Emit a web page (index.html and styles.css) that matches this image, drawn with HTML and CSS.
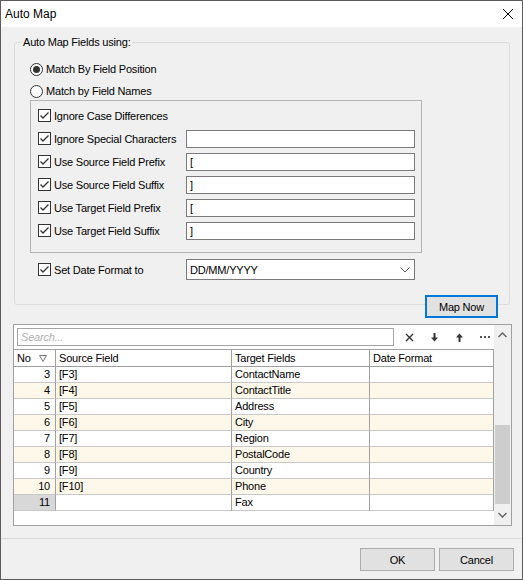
FILE: index.html
```html
<!DOCTYPE html>
<html lang="en">
<head>
    <meta charset="UTF-8">
    <title>Auto Map</title>
    <link rel="stylesheet" href="styles.css">
</head>
<body>
    <div class="window">
        <div class="titlebar">
            <span class="title">Auto Map</span>
            <svg class="close" width="12" height="12" viewBox="0 0 12 12"><path d="M1 1L11 11M11 1L1 11" stroke="#000" stroke-width="1"/></svg>
        </div>

        <div class="content">
            <fieldset class="group">
                <legend>Auto Map Fields using:</legend>

                <div class="radio-row">
                    <svg class="radio" width="13" height="13" viewBox="0 0 13 13"><circle cx="6.5" cy="6.5" r="6" fill="#fff" stroke="#333"/><circle cx="6.5" cy="6.5" r="3.5" fill="#333"/></svg>
                    <span>Match By Field Position</span>
                </div>
                <div class="radio-row">
                    <svg class="radio" width="13" height="13" viewBox="0 0 13 13"><circle cx="6.5" cy="6.5" r="6" fill="#fff" stroke="#333"/></svg>
                    <span>Match by Field Names</span>
                </div>

                <div class="options">
                    <div class="opt-row">
                        <label class="check"><svg width="13" height="13" viewBox="0 0 13 13"><rect x="0.5" y="0.5" width="12" height="12" fill="#fff" stroke="#333"/><path d="M2.5 6.5L5 9L10.5 3.5" fill="none" stroke="#333" stroke-width="1.3"/></svg>Ignore Case Differences</label>
                    </div>
                    <div class="opt-row">
                        <label class="check"><svg width="13" height="13" viewBox="0 0 13 13"><rect x="0.5" y="0.5" width="12" height="12" fill="#fff" stroke="#333"/><path d="M2.5 6.5L5 9L10.5 3.5" fill="none" stroke="#333" stroke-width="1.3"/></svg>Ignore Special Characters</label>
                        <div class="textbox"></div>
                    </div>
                    <div class="opt-row">
                        <label class="check"><svg width="13" height="13" viewBox="0 0 13 13"><rect x="0.5" y="0.5" width="12" height="12" fill="#fff" stroke="#333"/><path d="M2.5 6.5L5 9L10.5 3.5" fill="none" stroke="#333" stroke-width="1.3"/></svg>Use Source Field Prefix</label>
                        <div class="textbox">[</div>
                    </div>
                    <div class="opt-row">
                        <label class="check"><svg width="13" height="13" viewBox="0 0 13 13"><rect x="0.5" y="0.5" width="12" height="12" fill="#fff" stroke="#333"/><path d="M2.5 6.5L5 9L10.5 3.5" fill="none" stroke="#333" stroke-width="1.3"/></svg>Use Source Field Suffix</label>
                        <div class="textbox">]</div>
                    </div>
                    <div class="opt-row">
                        <label class="check"><svg width="13" height="13" viewBox="0 0 13 13"><rect x="0.5" y="0.5" width="12" height="12" fill="#fff" stroke="#333"/><path d="M2.5 6.5L5 9L10.5 3.5" fill="none" stroke="#333" stroke-width="1.3"/></svg>Use Target Field Prefix</label>
                        <div class="textbox">[</div>
                    </div>
                    <div class="opt-row">
                        <label class="check"><svg width="13" height="13" viewBox="0 0 13 13"><rect x="0.5" y="0.5" width="12" height="12" fill="#fff" stroke="#333"/><path d="M2.5 6.5L5 9L10.5 3.5" fill="none" stroke="#333" stroke-width="1.3"/></svg>Use Target Field Suffix</label>
                        <div class="textbox">]</div>
                    </div>
                </div>

                <div class="date-row">
                    <label class="check"><svg width="13" height="13" viewBox="0 0 13 13"><rect x="0.5" y="0.5" width="12" height="12" fill="#fff" stroke="#333"/><path d="M2.5 6.5L5 9L10.5 3.5" fill="none" stroke="#333" stroke-width="1.3"/></svg>Set Date Format to</label>
                    <div class="select">
                        <span>DD/MM/YYYY</span>
                        <svg width="10" height="6" viewBox="0 0 10 6"><path d="M0.5 0.5L5 5L9.5 0.5" fill="none" stroke="#555"/></svg>
                    </div>
                </div>
            </fieldset>

            <div class="action-row">
                <button class="btn primary">Map Now</button>
            </div>

            <div class="grid">
                <div class="grid-main">
                    <div class="toolbar">
                        <div class="search">Search...</div>
                        <svg class="tool" width="9" height="9" viewBox="0 0 9 9"><path d="M1 1L8 8M8 1L1 8" stroke="#333" stroke-width="1.4"/></svg>
                        <svg class="tool" width="9" height="9" viewBox="0 0 9 9"><path d="M3.5 0H5.5V4.5H8L4.5 8.5L1 4.5H3.5Z" fill="#333"/></svg>
                        <svg class="tool" width="9" height="9" viewBox="0 0 9 9"><path d="M3.5 9H5.5V4.5H8L4.5 0.5L1 4.5H3.5Z" fill="#333"/></svg>
                        <svg class="tool" width="11" height="3" viewBox="0 0 11 3"><rect x="0" y="0" width="2" height="2" fill="#555"/><rect x="4" y="0" width="2" height="2" fill="#555"/><rect x="8" y="0" width="2" height="2" fill="#555"/></svg>
                    </div>

                    <div class="row head">
                        <div class="cell no-head">No <svg width="8" height="7" viewBox="0 0 8 7"><path d="M0.5 0.5H7.5L4 6.5Z" fill="none" stroke="#777"/></svg></div>
                        <div class="cell">Source Field</div>
                        <div class="cell">Target Fields</div>
                        <div class="cell">Date Format</div>
                    </div>
                    <div class="row"><div class="cell num">3</div><div class="cell">[F3]</div><div class="cell">ContactName</div><div class="cell"></div></div>
                    <div class="row alt"><div class="cell num">4</div><div class="cell">[F4]</div><div class="cell">ContactTitle</div><div class="cell"></div></div>
                    <div class="row"><div class="cell num">5</div><div class="cell">[F5]</div><div class="cell">Address</div><div class="cell"></div></div>
                    <div class="row alt"><div class="cell num">6</div><div class="cell">[F6]</div><div class="cell">City</div><div class="cell"></div></div>
                    <div class="row"><div class="cell num">7</div><div class="cell">[F7]</div><div class="cell">Region</div><div class="cell"></div></div>
                    <div class="row alt"><div class="cell num">8</div><div class="cell">[F8]</div><div class="cell">PostalCode</div><div class="cell"></div></div>
                    <div class="row"><div class="cell num">9</div><div class="cell">[F9]</div><div class="cell">Country</div><div class="cell"></div></div>
                    <div class="row alt"><div class="cell num">10</div><div class="cell">[F10]</div><div class="cell">Phone</div><div class="cell"></div></div>
                    <div class="row"><div class="cell num current">11</div><div class="cell"></div><div class="cell">Fax</div><div class="cell"></div></div>
                </div>

                <div class="vscroll">
                    <div class="arrow"><svg width="9" height="6" viewBox="0 0 9 6"><path d="M0.5 5L4.5 1L8.5 5" fill="none" stroke="#606060" stroke-width="1.3"/></svg></div>
                    <div class="track"><div class="thumb"></div></div>
                    <div class="arrow"><svg width="9" height="6" viewBox="0 0 9 6"><path d="M0.5 1L4.5 5L8.5 1" fill="none" stroke="#606060" stroke-width="1.3"/></svg></div>
                </div>
            </div>
        </div>

        <div class="footer">
            <button class="btn">OK</button>
            <button class="btn">Cancel</button>
        </div>
    </div>
</body>
</html>
```

FILE: styles.css
```css
body {
    margin: 0;
    font-family: "Liberation Sans", Arial, sans-serif;
    font-size: 11px;
    letter-spacing: -0.2px;
    color: #000;
}

.window {
    width: 523px;
    height: 580px;
    box-sizing: border-box;
    border: 1px solid #5c5c5c;
    background: #f0f0f0;
    display: flex;
    flex-direction: column;
}

.titlebar {
    height: 26px;
    background: #fff;
    display: flex;
    align-items: center;
    justify-content: space-between;
    padding: 0 8px 0 4px;
}
.title {
    font-size: 12px;
    letter-spacing: 0;
}

.content {
    flex: 1;
    padding: 9px 12px 0 13px;
}

/* group box */
.group {
    margin: 0;
    border: 1px solid #dcdcdc;
    border-radius: 3px;
    padding: 9px 0 24px 15px;
}
.group legend {
    margin-left: -8px;
    padding: 0 1px;
    line-height: 13px;
}

.radio-row {
    height: 22px;
    display: flex;
    align-items: center;
    gap: 3px;
}

.options {
    width: 390px;
    border: 1px solid #b4b4b4;
    padding: 3px 0 10px 0;
    margin-top: -2px;
}
.opt-row {
    height: 23px;
    display: grid;
    grid-template-columns: 155px 229px;
    align-items: center;
}
.check {
    display: flex;
    align-items: center;
    gap: 3px;
    padding-left: 7px;
}
.check svg {
    flex: none;
}

.textbox {
    height: 18px;
    box-sizing: border-box;
    border: 1px solid #7a7a7a;
    background: #fff;
    padding: 0 3px;
    line-height: 16px;
}

.date-row {
    margin-top: 6px;
    height: 21px;
    display: grid;
    grid-template-columns: 156px 229px;
    align-items: center;
}
.date-row .check {
    padding-left: 8px;
}
.select {
    height: 21px;
    box-sizing: border-box;
    border: 1px solid #7a7a7a;
    background: #fff;
    display: flex;
    align-items: center;
    justify-content: space-between;
    padding: 0 4px 0 3px;
}

/* buttons */
.btn {
    font-family: inherit;
    font-size: 11px;
    letter-spacing: -0.2px;
    height: 23px;
    width: 75px;
    background: #e1e1e1;
    border: 1px solid #adadad;
    padding: 0;
    color: #000;
}
.btn.primary {
    width: 73px;
    border: 2px solid #0078d7;
}

.action-row {
    display: flex;
    justify-content: flex-end;
    margin-top: -10px;
    padding-right: 12px;
    position: relative;
}

/* grid */
.grid {
    margin-top: 6px;
    width: 499px;
    height: 202px;
    box-sizing: border-box;
    margin-left: -1px;
    border: 1px solid #a0a0a0;
    background: #fff;
    display: flex;
}
.grid-main {
    width: 480px;
}
.toolbar {
    height: 24px;
    display: flex;
    align-items: center;
    background: #fff;
}
.search {
    width: 377px;
    height: 18px;
    box-sizing: border-box;
    margin: 0 0 1px 3px;
    border: 1px solid #a5a5a5;
    color: #b0b0b0;
    font-style: italic;
    padding-left: 3px;
    line-height: 16px;
}
.tool {
    margin-left: 16px;
}
.tool:first-of-type {
    margin-left: 11px;
}

.row {
    display: grid;
    grid-template-columns: 42px 176px 138px 124px;
    height: 16px;
    background: #fff;
}
.row.alt {
    background: #fdf8ea;
}
.row.head {
    height: 17px;
    border-top: 1px solid #a0a0a0;
}
.cell {
    box-sizing: border-box;
    border-right: 1px solid #a0a0a0;
    border-bottom: 1px solid #c8c8c8;
    padding-left: 3px;
    line-height: 15px;
    white-space: nowrap;
    overflow: hidden;
}
.head .cell {
    border-bottom-color: #a0a0a0;
    line-height: 16px;
}
.no-head {
    display: flex;
    align-items: center;
    gap: 8px;
}
.cell.num {
    text-align: right;
    padding: 0 5px 0 0;
}
.cell.current {
    background: #d8d8d8;
}

.vscroll {
    width: 17px;
    background: #f0f0f0;
    display: flex;
    flex-direction: column;
}
.arrow {
    height: 20px;
    display: flex;
    align-items: center;
    justify-content: center;
}
.track {
    flex: 1;
    display: flex;
    flex-direction: column;
    justify-content: flex-end;
}
.thumb {
    height: 79px;
    margin: 0 1px 1px 1px;
    background: #cdcdcd;
}

.footer {
    height: 41px;
    border-top: 1px solid #d9d9d9;
    display: flex;
    justify-content: flex-end;
    align-items: flex-start;
    gap: 4px;
    padding: 9px 8px 0 0;
    box-sizing: border-box;
}
```
